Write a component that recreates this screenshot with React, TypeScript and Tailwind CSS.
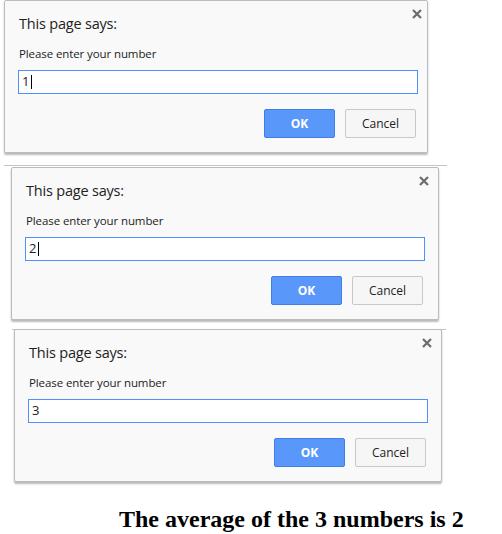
import React from "react";

function CloseIcon() {
  return (
    <svg width="10" height="10" viewBox="0 0 10 10" className="block">
      <path d="M1 1 L9 9 M9 1 L1 9" stroke="#6b6b6b" strokeWidth="2.2" strokeLinecap="butt" />
    </svg>
  );
}

function Dialog({ value, cursor, width }: { value: string; cursor: boolean; width: string }) {
  return (
    <div
      className={`${width} h-[153px] bg-[#f9f9f9] border border-[#bcbcbc] rounded-[2px] shadow-[0_2px_2px_rgba(0,0,0,0.28)] overflow-hidden font-['Open_Sans','Noto_Sans',sans-serif]`}
    >
      <div className="pl-[13px] pt-[13px] flex flex-col">
        <div className="w-[404px] flex justify-between items-start">
          <div className="pl-px text-[14.5px] tracking-[-0.2px] leading-[20px] text-[#222]">This page says:</div>
          <div className="-mt-[5px]">
            <CloseIcon />
          </div>
        </div>
        <div className="mt-[12px] pl-px text-[11.5px] tracking-[-0.1px] leading-[16px] text-[#222]">Please enter your number</div>
        <div className="mt-[8px] w-[400px] h-[24px] bg-white border border-[#4d90fe] flex items-center pl-[3px] text-[13px] text-[#222]">
          <span>{value}</span>
          {cursor && <span className="ml-[2px] w-px h-[14px] bg-black" />}
        </div>
        <div className="mt-[15px] w-[400px] flex justify-end gap-[10px] pr-[2px]">
          <div className="w-[71px] h-[29px] flex items-center justify-center rounded-[2px] bg-[#5a97fa] border border-[#3f7fe6] text-white font-bold text-[12px]">
            OK
          </div>
          <div className="w-[71px] h-[29px] flex items-center justify-center rounded-[2px] bg-[#f6f6f6] border border-[#c8c8c8] text-[#222] text-[12px]">
            Cancel
          </div>
        </div>
      </div>
    </div>
  );
}

export default function App() {
  return (
    <div className="w-[502px] h-[534px] bg-white overflow-hidden flex flex-col">
      <div className="ml-[4px]">
        <Dialog value="1" cursor={true} width="w-[424px]" />
      </div>
      <div className="mt-[12px] ml-[4px] w-[443px] h-px bg-[#c4c4c4]" />
      <div className="mt-[1px] ml-[11px]">
        <Dialog value="2" cursor={true} width="w-[428px]" />
      </div>
      <div className="mt-[9px] ml-[12px] w-[434px] h-px bg-[#c4c4c4]" />
      <div className="-mt-px ml-[14px]">
        <Dialog value="3" cursor={false} width="w-[428px]" />
      </div>
      <div className="mt-[23px] ml-[119px] text-[24px] leading-[28px] font-bold text-black font-['Liberation_Serif','Times_New_Roman',serif] whitespace-nowrap">
        The average of the 3 numbers is 2
      </div>
    </div>
  );
}
